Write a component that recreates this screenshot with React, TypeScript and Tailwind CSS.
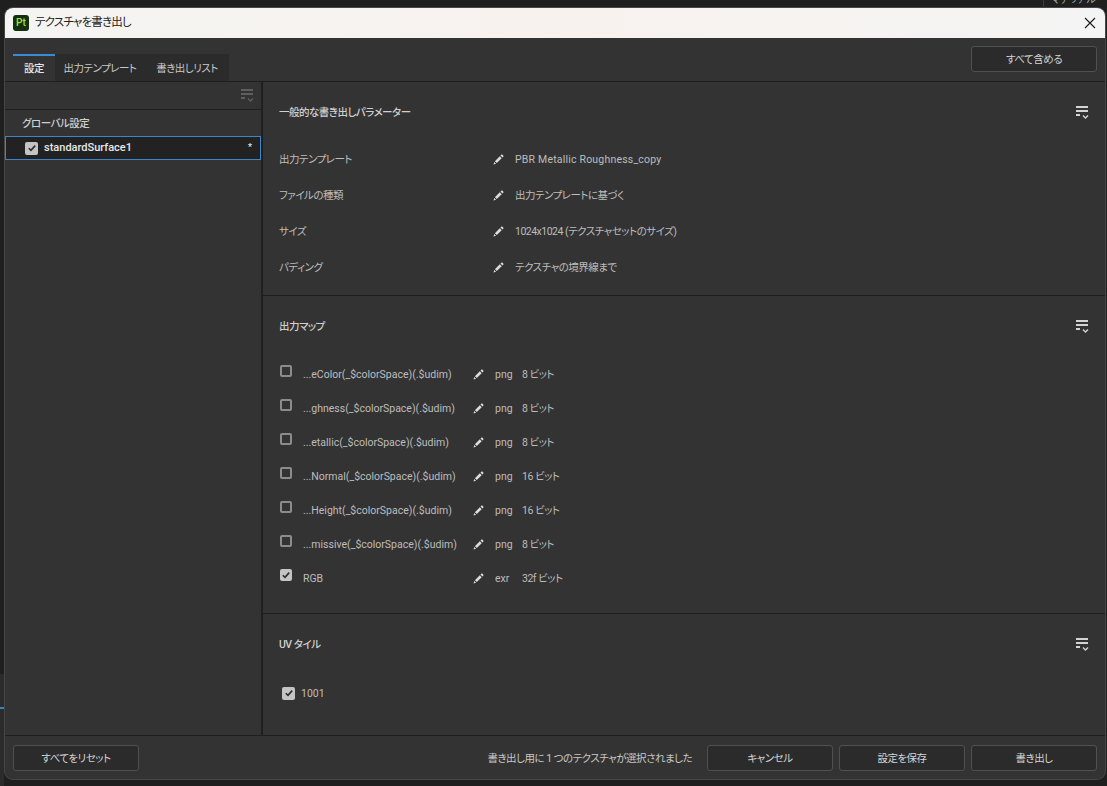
import { ReactNode } from "react";

const font = "font-['Roboto','Noto_Sans_CJK_JP',sans-serif] [font-feature-settings:'palt']";
const jp = "text-[10.5px] tracking-[-0.5px]";

function ListMenuIcon({ dim }: { dim?: boolean }) {
	return (
		<svg width="13" height="13" viewBox="0 0 13 13" className={dim ? "text-[#5f5f5f]" : "text-[#d4d4d4]"}>
			<path d="M0 1h12M0 5h12M0 9h4" stroke="currentColor" strokeWidth="2" fill="none" />
			<path d="M7 9.5l2.5 2.5L12 9.5" stroke="currentColor" strokeWidth="1.4" fill="none" />
		</svg>
	);
}

function Pencil() {
	return (
		<svg width="11" height="11" viewBox="0 0 11 11" className="shrink-0 text-[#dcdcdc]">
			<path d="M0.5 10.5l0.7-2.6 1.9 1.9zM1.9 7.2l4.9-4.9 1.9 1.9-4.9 4.9zM7.5 1.6l1-1a.6.6 0 0 1 .8 0l1.1 1.1a.6.6 0 0 1 0 .8l-1 1z" fill="currentColor" />
		</svg>
	);
}

function Check({ checked, className }: { checked: boolean; className: string }) {
	if (!checked) {
		return <div className={`h-3 w-3 shrink-0 rounded-[2px] border-2 border-[#8c8c8c] ${className}`} />;
	}
	return (
		<div className={`flex h-3 w-3 shrink-0 items-center justify-center rounded-[2px] bg-[#c4c4c4] ${className}`}>
			<svg width="10" height="10" viewBox="0 0 10 10">
				<path d="M1.8 5.2l2.2 2.2 4.2-4.8" stroke="#2c2c2c" strokeWidth="1.6" fill="none" />
			</svg>
		</div>
	);
}

function Btn({ children }: { children: ReactNode }) {
	return (
		<div className={`flex h-[26px] w-[126px] items-center justify-center rounded-[3px] border border-[#505050] bg-[#2b2b2b] pt-[2px] text-[#d4d4d4] ${jp}`}>
			{children}
		</div>
	);
}

function SectionHead({ title }: { title: string }) {
	return (
		<div className={`flex h-[20px] items-center justify-between pl-4 pr-[16px] font-medium text-[#cfcfcf] ${jp}`}>
			<span className="pt-px">{title}</span>
			<ListMenuIcon />
		</div>
	);
}

const params = [
	["出力テンプレート", "PBR Metallic Roughness_copy"],
	["ファイルの種類", "出力テンプレートに基づく"],
	["サイズ", "1024x1024 (テクスチャセットのサイズ)"],
	["パディング", "テクスチャの境界線まで"],
];

const maps = [
	["...eColor(_$colorSpace)(.$udim)", "png", "8 ビット", false],
	["...ghness(_$colorSpace)(.$udim)", "png", "8 ビット", false],
	["...etallic(_$colorSpace)(.$udim)", "png", "8 ビット", false],
	["...Normal(_$colorSpace)(.$udim)", "png", "16 ビット", false],
	["...Height(_$colorSpace)(.$udim)", "png", "16 ビット", false],
	["...missive(_$colorSpace)(.$udim)", "png", "8 ビット", false],
	["RGB", "exr", "32f ビット", true],
] as const;

export default function App() {
	return (
		<div className={`relative h-[786px] w-[1107px] overflow-hidden bg-[#1f1f1f] pl-[5px] pt-2 ${font}`}>
			<div className="absolute bottom-0 left-0 top-[674px] w-1 bg-[#2b2b2b]" />
			<div className="absolute left-0 top-[707px] h-[2px] w-1 bg-[#3f7fc4]" />
			<div className="absolute left-[1043px] top-0 h-2 w-px bg-[#3a3a3a]" />
			<div className="absolute left-[1051px] top-[-8px] text-[10px] text-[#a8a8a8]">マテリアル</div>

			<div className="flex h-[771px] w-[1100px] flex-col overflow-hidden rounded-lg bg-[#333333] ring-1 ring-[#464646]">
				<div className="flex h-[30px] shrink-0 items-center justify-between bg-gradient-to-r from-[#f4f4f2] via-[#f8f2ee] to-[#f4f4f4] pl-2 pr-2">
					<div className="flex items-center gap-1">
						<div className="flex h-4 w-4 items-center justify-center rounded-[3px] bg-[#14300f] text-[10px] font-medium leading-none text-[#a6e23f]">
							Pt
						</div>
						<span className="ml-[2px] text-[11.5px] tracking-[-0.8px] text-[#222222]">テクスチャを書き出し</span>
					</div>
					<svg width="12" height="12" viewBox="0 0 12 12" className="mr-[1px]">
						<path d="M1 1l10 10M11 1L1 11" stroke="#1a1a1a" strokeWidth="1.1" fill="none" />
					</svg>
				</div>

				<div className="flex h-[44px] shrink-0 items-end justify-between border-b border-[#1f1f1f] pl-2 pr-2">
					<div className={`flex h-[27px] ${jp}`}>
						<div className="flex w-[42px] items-center justify-center border-t-2 border-[#3b8ad6] font-medium text-[#e6e6e6]">
							設定
						</div>
						<div className="flex w-[90px] items-center justify-center bg-[#2b2b2b] pt-[2px] text-[#c8c8c8]">出力テンプレート</div>
						<div className="flex w-[84px] items-center justify-center bg-[#2b2b2b] pt-[2px] text-[#c8c8c8]">書き出しリスト</div>
					</div>
					<div className="mb-[9px]">
						<Btn>すべて含める</Btn>
					</div>
				</div>

				<div className="flex min-h-0 flex-1">
					<div className="w-[256px] shrink-0">
						<div className="flex h-[28px] items-center justify-end border-b border-[#1f1f1f] pr-[7px]">
							<ListMenuIcon dim />
						</div>
						<div className={`flex h-[26px] items-center pl-[17px] pt-px font-medium text-[#cfcfcf] ${jp}`}>グローバル設定</div>
						<div className="flex h-[24px] items-center border border-[#3f86c9] bg-[#222222] pl-[19px] pr-[8px] text-[11px] font-medium text-[#e8e8e8]">
							<Check checked className="!h-[13px] !w-[13px]" />
							<span className="ml-[6px] flex-1 pt-px">standardSurface1</span>
							<span className="text-[9px]">*</span>
						</div>
					</div>

					<div className="min-w-0 flex-1 border-l-2 border-[#1f1f1f]">
						<div className="h-[214px] border-b border-[#1f1f1f] pt-5">
							<SectionHead title="一般的な書き出しパラメーター" />
							<div className="mt-[27px] flex flex-col gap-4">
								{params.map(([label, value], i) => (
									<div key={label} className={`flex h-5 items-center text-[#bdbdbd] ${jp}`}>
										<span className="w-[230px] pl-4 pt-[2px]">{label}</span>
										<Pencil />
										<span className={i === 0 ? "ml-[11px] pt-[2px] tracking-[0.2px]" : "ml-[11px] pt-[2px]"}>{value}</span>
									</div>
								))}
							</div>
						</div>

						<div className="h-[318px] border-b border-[#1f1f1f] pt-5">
							<SectionHead title="出力マップ" />
							<div className="mt-[21px] flex flex-col">
								{maps.map(([name, format, bits, checked]) => (
									<div key={name} className="flex h-[34px] items-center text-[10.5px] text-[#bdbdbd]">
										<Check checked={checked} className="mb-[6px] ml-[17px]" />
										<span className="ml-[11px] w-[170px] whitespace-nowrap pt-[2px]">{name}</span>
										<Pencil />
										<span className="ml-[11px] w-[27px] pt-[2px]">{format}</span>
										<span className="pt-[2px] tracking-[-0.5px]">{bits}</span>
									</div>
								))}
							</div>
						</div>

						<div className="pt-5">
							<SectionHead title="UV タイル" />
							<div className="mt-[29px] flex h-5 items-center text-[10.5px] text-[#bdbdbd]">
								<Check checked className="!h-[13px] !w-[13px] ml-[19px]" />
								<span className="ml-[6px] pt-[2px]">1001</span>
							</div>
						</div>
					</div>
				</div>

				<div className="flex h-[44px] shrink-0 items-center justify-between border-t border-[#1f1f1f] pl-2 pr-2">
					<Btn>すべてをリセット</Btn>
					<div className="flex items-center gap-[6px]">
						<span className={`mr-[9px] pt-[2px] text-[#c8c8c8] ${jp}`}>書き出し用に 1 つのテクスチャが選択されました</span>
						<Btn>キャンセル</Btn>
						<Btn>設定を保存</Btn>
						<Btn>書き出し</Btn>
					</div>
				</div>
			</div>
		</div>
	);
}
